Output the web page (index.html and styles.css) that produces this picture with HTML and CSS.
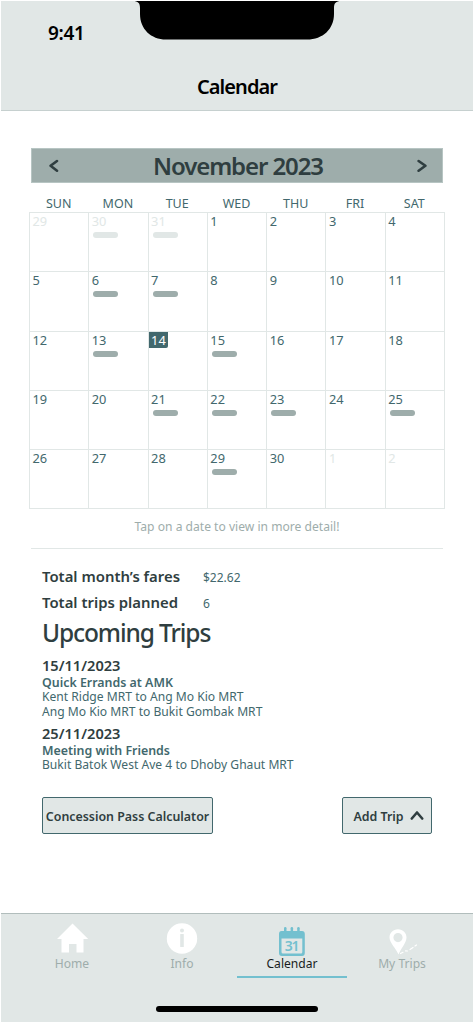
FILE: index.html
```
<!DOCTYPE html>
<html lang="en">
<head>
<meta charset="utf-8">
<title>Calendar</title>
<link rel="stylesheet" href="styles.css">
</head>
<body>
<div class="phone">
  <header class="top">
    <svg class="notch" width="208" height="40" viewBox="0 0 208 40"><path d="M0 1C5 1 7 3 7 8V14C7 29 18 39.500 33 39.500H174C190 39.500 201 29 201 14V8C201 3 203 1 208 1Z"/></svg>
    <span class="clock">9:41</span>
    <h1 class="title">Calendar</h1>
  </header>
  <main class="content">
    <div class="month">
      <svg width="10" height="14" viewBox="0 0 10 14"><path d="M8 2L1.600 6.800L8 11.700"/></svg>
      <h2 class="month-name">November 2023</h2>
      <svg width="10" height="14" viewBox="0 0 10 14"><path d="M1.600 2L8.400 6.800L1.600 11.700"/></svg>
    </div>
    <div class="weekdays"><span>SUN</span><span>MON</span><span>TUE</span><span>WED</span><span>THU</span><span>FRI</span><span>SAT</span></div>
    <div class="days">
      <div class="day faded"><span>29</span></div><div class="day faded trip"><span>30</span></div><div class="day faded trip"><span>31</span></div><div class="day"><span>1</span></div><div class="day"><span>2</span></div><div class="day"><span>3</span></div><div class="day"><span>4</span></div>
      <div class="day"><span>5</span></div><div class="day trip"><span>6</span></div><div class="day trip"><span>7</span></div><div class="day"><span>8</span></div><div class="day"><span>9</span></div><div class="day"><span>10</span></div><div class="day"><span>11</span></div>
      <div class="day"><span>12</span></div><div class="day trip"><span>13</span></div><div class="day today"><span>14</span></div><div class="day trip"><span>15</span></div><div class="day"><span>16</span></div><div class="day"><span>17</span></div><div class="day"><span>18</span></div>
      <div class="day"><span>19</span></div><div class="day"><span>20</span></div><div class="day trip"><span>21</span></div><div class="day trip"><span>22</span></div><div class="day trip"><span>23</span></div><div class="day"><span>24</span></div><div class="day trip"><span>25</span></div>
      <div class="day"><span>26</span></div><div class="day"><span>27</span></div><div class="day"><span>28</span></div><div class="day trip"><span>29</span></div><div class="day"><span>30</span></div><div class="day faded"><span>1</span></div><div class="day faded"><span>2</span></div>
    </div>
    <p class="hint">Tap on a date to view in more detail!</p>
    <section class="summary">
      <dl class="totals">
        <dt>Total month’s fares</dt><dd>$22.62</dd>
        <dt>Total trips planned</dt><dd>6</dd>
      </dl>
      <h2 class="upcoming">Upcoming Trips</h2>
      <article class="event">
        <h3>15/11/2023</h3>
        <h4>Quick Errands at AMK</h4>
        <p>Kent Ridge MRT to Ang Mo Kio MRT</p>
        <p>Ang Mo Kio MRT to Bukit Gombak MRT</p>
      </article>
      <article class="event">
        <h3>25/11/2023</h3>
        <h4>Meeting with Friends</h4>
        <p>Bukit Batok West Ave 4 to Dhoby Ghaut MRT</p>
      </article>
    </section>
    <div class="actions">
      <button class="btn btn-pass">Concession Pass Calculator</button>
      <button class="btn btn-add">Add Trip <svg width="14" height="10" viewBox="0 0 14 10"><path d="M1.800 7.500L7 1.500L12.200 7.500"/></svg></button>
    </div>
  </main>
  <footer class="bottom">
    <nav class="tabs">
      <a class="tab"><svg width="34" height="34" viewBox="0 0 34 34"><path fill="#fff" d="M17.500 1.500L33.200 17H28.500V30.500H21.500V22H14V30.500H6.500V17H2Z"/></svg><span>Home</span></a>
      <a class="tab"><svg width="34" height="34" viewBox="0 0 34 34"><circle cx="17" cy="16.500" r="15.200" fill="#fff"/><circle cx="17" cy="8.600" r="2" fill="#e1e7e6"/><rect x="15.200" y="12" width="3.600" height="13" rx=".5" fill="#e1e7e6"/></svg><span>Info</span></a>
      <a class="tab active"><svg width="34" height="34" viewBox="0 0 34 34"><g fill="#73c0cf"><rect x="9" y="5" width="2.500" height="7" rx="1.200"/><rect x="15.600" y="5" width="2.500" height="7" rx="1.200"/><rect x="22.200" y="5" width="2.500" height="7" rx="1.200"/><path fill-rule="evenodd" d="M6.500 9H27Q29.800 9 29.800 12V31Q29.800 34 27 34H6.800Q4 34 4 31V12Q4 9 6.500 9ZM6.500 16.500V30Q6.500 31.500 8 31.500H26Q27.300 31.500 27.300 30V16.500Z"/></g><text class="date-num" x="16.500" y="29.300">31</text></svg><span>Calendar</span></a>
      <a class="tab"><svg width="34" height="34" viewBox="0 0 34 34"><path fill="#fff" fill-rule="evenodd" d="M13 7.300C18 7.300 21.500 11 21.500 15.500C21.500 21 16 26 13.500 32.500C11 26 4.500 21 4.500 15.500C4.500 11 8 7.300 13 7.300ZM13 11A4.600 4.600 0 1 0 13 20.200A4.600 4.600 0 1 0 13 11Z"/><path fill="none" stroke="#fff" stroke-width="1.200" stroke-linecap="round" d="M15.500 31.500L18 30.300M20.500 28.800L22.500 29M25 27.500L28 25.500M30 24L31.500 23"/></svg><span>My Trips</span></a>
    </nav>
    <div class="home-bar"></div>
  </footer>
</div>
</body>
</html>
```
FILE: styles.css
```
* { box-sizing: border-box; }
body { margin: 0; background: #fff; color: #2f3e40; font-family: "Noto Sans", sans-serif; }
h1, h2, h3, h4, p, dl, dd { margin: 0; }
svg { display: block; flex: none; }
.phone { width: 473px; height: 1022px; padding: 1px 0 0 1px; display: flex; flex-direction: column; overflow: hidden; }
.top { position: relative; height: 110px; background: #e1e7e6; border-bottom: 1px solid #c6d0cf; padding: 17px 0 0; color: #000; }
.notch { position: absolute; left: 132px; top: -1px; }
.clock { display: block; padding-left: 47px; font-size: 19px; line-height: 30px; font-weight: 600; letter-spacing: -.3px; }
.title { margin-top: 24px; font-size: 20px; line-height: 30px; font-weight: 600; letter-spacing: -.95px; text-align: center; }
.content { height: 802px; padding: 37px 0 0; }
.month { margin-left: 30px; width: 412px; height: 35px; padding: 0 15px 0 17px; display: flex; align-items: center; justify-content: space-between; background: #9eadab; border: 1px solid #b7c5c3; }
.month path, .btn path { fill: none; stroke: #2f3e40; stroke-width: 2.600; stroke-linecap: round; stroke-linejoin: round; }
.month-name { padding-top: 1px; font-size: 24px; line-height: 32px; font-weight: 600; letter-spacing: -1.100px; }
.weekdays, .days { display: grid; grid-template-columns: repeat(7, 59.286px); margin-left: 28px; color: #42686d; font-size: 12.800px; }
.weekdays { margin-top: 12px; height: 17px; line-height: 17px; font-size: 12.500px; text-align: center; }
.days { width: 416px; border-left: 1px solid #e1e7e6; border-top: 1px solid #e1e7e6; grid-auto-rows: 59.300px; }
.day { border-right: 1px solid #e1e7e6; border-bottom: 1px solid #e1e7e6; line-height: 16px; }
.day span { display: block; padding-left: 2.500px; width: 19px; height: 16px; }
.trip::after { content: ""; display: block; width: 25px; height: 6px; margin: 3px 0 0 4px; border-radius: 3px; background: #9eadab; }
.faded { color: #e1e7e6; }
.faded::after { background: #e1e7e6; }
.today span { background: #42686d; color: #fff; border-radius: 0 0 2px 0; }
.hint { margin: 9px 30px 0; height: 31px; border-bottom: 1px solid #e1e7e6; font-size: 12.100px; line-height: 18px; text-align: center; color: #9eadab; }
.summary { padding: 15px 0 0 41px; }
.totals { display: grid; grid-template-columns: 161px 1fr; grid-auto-rows: 25.400px; line-height: 25px; }
.totals dt { font-size: 14.900px; font-weight: 600; }
.totals dd { font-size: 12px; color: #42686d; padding-top: 1px; }
.upcoming { font-size: 24.500px; line-height: 36px; font-weight: 500; letter-spacing: -1.100px; }
.event { margin-top: 4px; color: #42686d; font-size: 12.100px; line-height: 14.600px; }
.event h3 { font-size: 14.600px; line-height: 20px; font-weight: 600; color: #2f3e40; }
.event h4 { font-size: 12.400px; line-height: 15px; font-weight: 600; }
.actions { display: flex; justify-content: space-between; margin: 24px 41px 0; }
.btn { height: 37px; display: flex; align-items: center; justify-content: center; padding: 1px 0 0; border: 1px solid #42686d; border-radius: 2px; background: #e1e7e6; color: #2f3e40; font: 600 12.400px "Noto Sans", sans-serif; white-space: nowrap; }
.btn-pass { width: 171px; }
.btn-add { width: 90px; gap: 6px; padding-left: 3px; }
.bottom { height: 109px; background: #e1e7e6; border-top: 1px solid #b1bdbc; }
.tabs { display: grid; grid-template-columns: repeat(4, 110px); margin: 8px 0 0 16px; }
.tab { height: 56px; display: flex; flex-direction: column; align-items: center; color: #9eadab; font-size: 12.100px; line-height: 16px; border-bottom: 2px solid transparent; }
.active { color: #181d1d; border-color: #73c0cf; }
.date-num { font: 600 14px "Noto Sans", sans-serif; letter-spacing: -1.200px; text-anchor: middle; fill: #73c0cf; }
.home-bar { width: 162px; height: 6px; margin: 28px 0 0 155px; border-radius: 3px; background: #000; }
```
